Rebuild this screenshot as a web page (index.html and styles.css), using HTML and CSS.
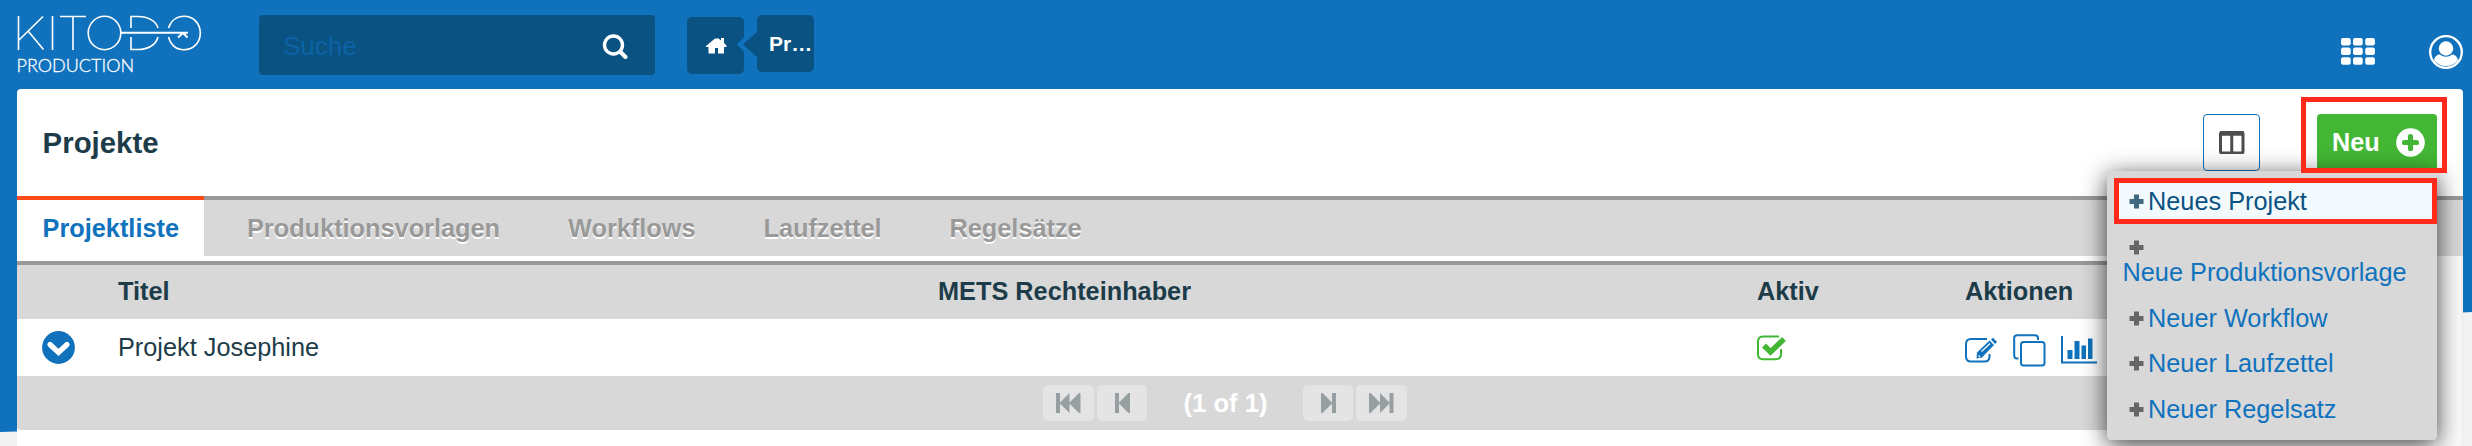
FILE: index.html
```html
<!DOCTYPE html>
<html lang="de">
<head>
<meta charset="utf-8">
<title>Kitodo Production</title>
<link rel="stylesheet" href="styles.css">
</head>
<body>
<svg class="backdrop" viewBox="0 0 2472 446"><path d="M0 0H2472V312L17 431.500L0 432Z" fill="#1072bd"/></svg>
<div class="page">
<header class="topbar">
  <svg class="logo" viewBox="0 0 190 64" fill="none" stroke="#fff" stroke-width="1.6">
    <path d="M1.500 1V35M26 1.500L2 25M11 16L26.500 34.500M35.500 1V35M43 1.500H69M56 1.500V35"/>
    <ellipse cx="87.500" cy="18" rx="16.300" ry="16.700"/>
    <path d="M114 13V1.500H121C131 1.500 139 6 141 13M114 22V34.500H121C131 34.500 139 30 141 22"/>
    <path d="M151.500 13C154 5.500 160 1.300 167 1.300C176.500 1.300 183.300 8.500 183.300 18C183.300 27.500 176.500 34.700 167 34.700C160 34.700 154 30.500 151.500 22"/>
    <path d="M104 17.700H171M161 22.500L166 18L170.500 22.500" stroke-width="2"/>
    <text x="-.5" y="56.500" class="logo-sub" textLength="117.500" stroke="#fff" stroke-width=".3" fill="#fff">PRODUCTION</text>
  </svg>
  <div class="search">
    <span>Suche</span>
    <svg width="27" height="27" viewBox="0 0 27 27" fill="none" stroke="#fff"><circle cx="11.500" cy="11" r="9" stroke-width="3.400"/><path d="M18 17.500L23.500 23" stroke-width="4" stroke-linecap="round"/></svg>
  </div>
  <nav class="crumbs">
    <a class="crumb home"><svg width="21" height="16" viewBox="0 0 21 16" fill="#fff"><path d="M0 8L9 .5H12.500L15 2.500V0H18V5L20.500 7.500V9H18V15.500H12V10H9V15.500H2.500V9H0Z"/></svg></a>
    <a class="crumb last"><svg class="notch" width="22" height="34" viewBox="0 0 22 34"><path d="M17 0L1 16.500L17 33L22 29V4Z" fill="#1072bd"/><path d="M22 3L7 16.500L22 30Z" fill="#0a5282"/></svg>Pr…</a>
  </nav>
  <div class="tools">
    <svg class="apps" width="34" height="27" viewBox="0 0 34 27" fill="#fff"><rect width="9.700" height="7.500" rx="2"/><rect x="12" width="9.700" height="7.500" rx="2"/><rect x="24.200" width="9.700" height="7.500" rx="2"/><rect y="9.500" width="9.700" height="7.500" rx="2"/><rect x="12" y="9.500" width="9.700" height="7.500" rx="2"/><rect x="24.200" y="9.500" width="9.700" height="7.500" rx="2"/><rect y="19.200" width="9.700" height="7.500" rx="2"/><rect x="12" y="19.200" width="9.700" height="7.500" rx="2"/><rect x="24.200" y="19.200" width="9.700" height="7.500" rx="2"/></svg>
    <svg width="34" height="34" viewBox="0 0 34 34"><circle cx="17" cy="17" r="15.800" fill="none" stroke="#fff" stroke-width="2.300"/><circle cx="17" cy="13.500" r="7.200" fill="#fff"/><path d="M5 25C6 21 8.500 19.500 11 19.500C14.500 22.500 19.500 22.500 23 19.500C25.500 19.500 28 21 29 25A15 15 0 0 1 5 25Z" fill="#fff"/></svg>
  </div>
</header>
<main class="card">
  <div class="titlebar">
    <h1>Projekte</h1>
    <div class="buttons">
      <button class="columns"><svg width="26" height="23" viewBox="0 0 26 23" fill="none" stroke="#4d4d4d"><rect x="1.500" y="1.500" width="22.500" height="20.500" rx="1.500" stroke-width="3"/><path d="M1 2.500H25" stroke-width="4.500"/><path d="M12.750 3V22" stroke-width="3"/></svg></button>
      <div class="new-wrap">
        <button class="new">Neu<svg width="29" height="29" viewBox="0 0 29 29"><circle cx="14.500" cy="14.500" r="14.300" fill="#fff"/><path d="M14.500 8.500V20.500M8.500 14.500H20.500" stroke="#43b735" stroke-width="5.200" stroke-linecap="round"/></svg></button>
        <ul class="menu">
          <li class="active"><svg class="plus" viewBox="0 0 15 15"><path d="M7.500 .5V14.500M.5 7.500H14.500"/></svg><span>Neues Projekt</span></li>
          <li class="wrap"><svg class="plus" viewBox="0 0 15 15"><path d="M7.500 .5V14.500M.5 7.500H14.500"/></svg><span>Neue Produktionsvorlage</span></li>
          <li><svg class="plus" viewBox="0 0 15 15"><path d="M7.500 .5V14.500M.5 7.500H14.500"/></svg><span>Neuer Workflow</span></li>
          <li><svg class="plus" viewBox="0 0 15 15"><path d="M7.500 .5V14.500M.5 7.500H14.500"/></svg><span>Neuer Laufzettel</span></li>
          <li><svg class="plus" viewBox="0 0 15 15"><path d="M7.500 .5V14.500M.5 7.500H14.500"/></svg><span>Neuer Regelsatz</span></li>
        </ul>
        <div class="marker"></div>
      </div>
    </div>
  </div>
  <div class="tabs">
    <a class="tab current">Projektliste</a><a class="tab">Produktionsvorlagen</a><a class="tab">Workflows</a><a class="tab">Laufzettel</a><a class="tab">Regelsätze</a>
  </div>
  <div class="body">
  <section class="table">
    <div class="row head"><span></span><span>Titel</span><span>METS Rechteinhaber</span><span>Aktiv</span><span>Aktionen</span></div>
    <div class="row data">
      <span class="toggle"><svg width="33" height="33" viewBox="0 0 33 33"><circle cx="16.500" cy="16.500" r="16.400" fill="#1072bd"/><path d="M8 13.500L16.500 21.500L25 13.500" fill="none" stroke="#fff" stroke-width="5.200" stroke-linecap="round"/></svg></span>
      <span>Projekt Josephine</span><span></span>
      <span class="check"><svg width="30" height="26" viewBox="0 0 30 26" fill="none" stroke="#43b735"><path d="M22 1.500H6Q1 1.500 1 6.500V19Q1 24.200 6 24.200H19Q24 24.200 24 19V14" stroke-width="2"/><path d="M7 10.500L13.500 17L27 4" stroke-width="5.500"/></svg></span>
      <span class="actions">
        <svg width="33" height="26" viewBox="0 0 33 26" fill="none" stroke="#1072bd"><path d="M22 2H6Q1 2 1 7V19.500Q1 24.500 6 24.500H19.500Q24.500 24.500 24.500 19.500V17" stroke-width="2"/><path d="M12 15.500L24.500 3.500L29 8L17 20.500L11.500 21.500Z" fill="#1072bd" stroke="none"/><path d="M26 2.500L28 .8L32 5L30 7Z" fill="#1072bd" stroke="none"/><path d="M16.500 14.500L25 6.500M13.500 18.500L15 20" stroke="#fff" stroke-width="1.100"/></svg>
        <svg width="33" height="33" viewBox="0 0 33 33" fill="none" stroke="#1072bd" stroke-width="2"><path d="M5.500 24.500H4Q1.200 24.500 1.200 21.500V4Q1.200 1.200 4 1.200H22Q25 1.200 25 4V6"/><rect x="8" y="8" width="23.500" height="23.500" rx="2.500"/></svg>
        <svg width="37" height="28" viewBox="0 0 37 28" fill="#1072bd"><path d="M0 0H2V25.500H36V27.500H0Z"/><path d="M6.500 14H11.500V23H6.500ZM13.500 5H18.500V23H13.500ZM20.500 9.500H25V23H20.500ZM27 2.500H31.500V23H27Z"/></svg>
      </span>
    </div>
    <div class="pager">
      <button class="edge"><svg width="25" height="20" viewBox="0 0 25 20"><path d="M0 0H4V9.500L13.500 0V9.500L23 0H24.500V20H23L13.500 10.500V20L4 10.500V20H0Z"/></svg></button>
      <button><svg width="15" height="20" viewBox="0 0 15 20"><path d="M0 0H4V9.500L13.500 0H15V20H13.500L4 10.500V20H0Z"/></svg></button>
      <b>(1 of 1)</b>
      <button><svg width="15" height="20" viewBox="0 0 15 20"><path d="M15 0H11V9.500L1.500 0H0V20H1.500L11 10.500V20H15Z"/></svg></button>
      <button class="edge"><svg width="25" height="20" viewBox="0 0 25 20"><path d="M24.500 0H20.500V9.500L11 0V9.500L1.500 0H0V20H1.500L11 10.500V20L20.500 10.500V20H24.500Z"/></svg></button>
    </div>
  </section>
  <div class="gutter"></div>
  </div>
</main>
</div>
</body>
</html>
```
FILE: styles.css
```css
* { box-sizing: border-box; }
body { margin: 0; background: #f2f2f2; font-family: "Liberation Sans", Arial, sans-serif; font-size: 25.3px; color: #1d3c49; overflow: hidden; }
svg { display: block; flex: none; }
button { border: 0; padding: 0; font: inherit; }
h1, ul { margin: 0; padding: 0; }
.backdrop { position: absolute; left: 0; top: 0; width: 2472px; height: 446px; }
.page { position: relative; height: 446px; display: flex; flex-direction: column; }
.topbar { height: 89px; flex: none; display: flex; align-items: flex-start; padding: 15px 9px 0 17px; }
.logo { width: 190px; height: 64px; }
.logo-sub { font-family: Lato, sans-serif; font-weight: 300; font-size: 18px; }
.search { margin-left: 52px; width: 396px; height: 60px; border-radius: 4px; background: #0a5282; color: #0c63a5; font-size: 26px; display: flex; align-items: center; justify-content: space-between; padding: 2px 26px 0 24px; }
.search svg { margin-top: 2px; }
.crumbs { display: flex; gap: 13px; margin-left: 32px; }
.crumb { width: 57px; height: 57px; border-radius: 5px; background: #0a5282; color: #fff; font-weight: bold; font-size: 21px; display: flex; align-items: center; }
.home { margin-top: 2px; padding-left: 2px; justify-content: center; }
.last { position: relative; padding-left: 12px; }
.notch { position: absolute; left: -21px; top: 13px; }
.tools { margin-left: auto; display: flex; align-items: center; gap: 54px; padding-top: 20px; }
.apps { margin-bottom: 2px; }
.card { width: 2446px; margin-left: 17px; flex: 1; background: #fff; border-radius: 4px 4px 0 0; }
.titlebar { height: 107px; display: flex; justify-content: space-between; align-items: flex-start; padding: 25px 26px 0 25.600px; }
h1 { font-size: 29.4px; line-height: 34px; margin-top: 12px; }
.buttons { display: flex; gap: 57px; }
.columns { width: 57px; height: 57px; border: 1px solid #1072bd; border-radius: 4px; background: #fff; display: flex; align-items: center; justify-content: center; }
.new-wrap { position: relative; }
.new { width: 120px; height: 57px; border-radius: 4px 4px 0 0; background: #43b735; color: #fff; font-weight: bold; display: flex; align-items: center; justify-content: space-between; padding: 0 12px 0 15px; }
.marker { position: absolute; left: -16px; top: -17px; width: 146px; height: 76px; border: 5px solid #ff2a1a; z-index: 3; }
.menu { position: absolute; right: 0; top: 57px; width: 330px; height: 269px; background: #d8d8d8; border-radius: 4px; box-shadow: 0 5px 24px rgba(0,0,0,.75); list-style: none; padding: 7px 0 0 7px; z-index: 2; color: #1072bd; }
.menu li { height: 45.300px; display: flex; align-items: center; gap: 4px; padding-left: 15px; white-space: nowrap; line-height: 29px; }
.menu .active { height: 46px; width: 323px; border: 5px solid #ff2a1a; background: #f3fafe; color: #0a5282; padding-left: 10px; margin-bottom: 3px; }
.menu .wrap { height: 68px; margin-bottom: 1px; flex-direction: column; align-items: flex-start; gap: 3px; padding: 13px 0 0 8.500px; }
.wrap .plus { margin-left: 6.500px; }
.plus { width: 15px; height: 15px; stroke: #666; stroke-width: 5; }
.active .plus { stroke: #40687f; }
.tabs { height: 60px; background: #d8d8d8; display: flex; }
.tab { height: 60px; border-top: 4px solid #999; padding: 13px 25px 0 43px; flex: none; font-weight: bold; line-height: 30px; color: #999; text-shadow: 0 2px 0 #fff; }
.tab:last-child { flex: 1; }
.current { width: 187px; padding-left: 25.600px; padding-right: 0; background: #fff; color: #1072bd; border-top-color: #fc4a1a; }
.body { display: flex; }
.gutter { width: 26px; height: 190px; background: #fafafa; border-right: 2px solid #f2f2f2; }
.table { margin-top: 5px; border-top: 4px solid #999; width: 2420px; }
.row { display: grid; grid-template-columns: 101px 820px 819px 208px 1fr; align-items: center; }
.head { height: 54px; padding-bottom: 2px; background: #d8d8d8; font-weight: bold; }
.data { height: 57px; background: #fff; }
.toggle { padding-left: 25px; }
.actions { display: flex; gap: 15px; align-items: center; padding-top: 5px; }
.pager { height: 54px; background: #d8d8d8; display: flex; align-items: center; padding-left: 1026px; color: #fff; gap: 3px; border-radius: 0 0 4px 4px; }
.pager button { width: 50px; height: 36px; border-radius: 5px; background: #e4e4e4; display: flex; align-items: center; justify-content: center; }
.pager .edge { width: 51px; }
.pager svg { fill: #979fa3; }
.pager b { width: 150px; padding-left: 1px; text-align: center; font-size: 25.6px; }
```
